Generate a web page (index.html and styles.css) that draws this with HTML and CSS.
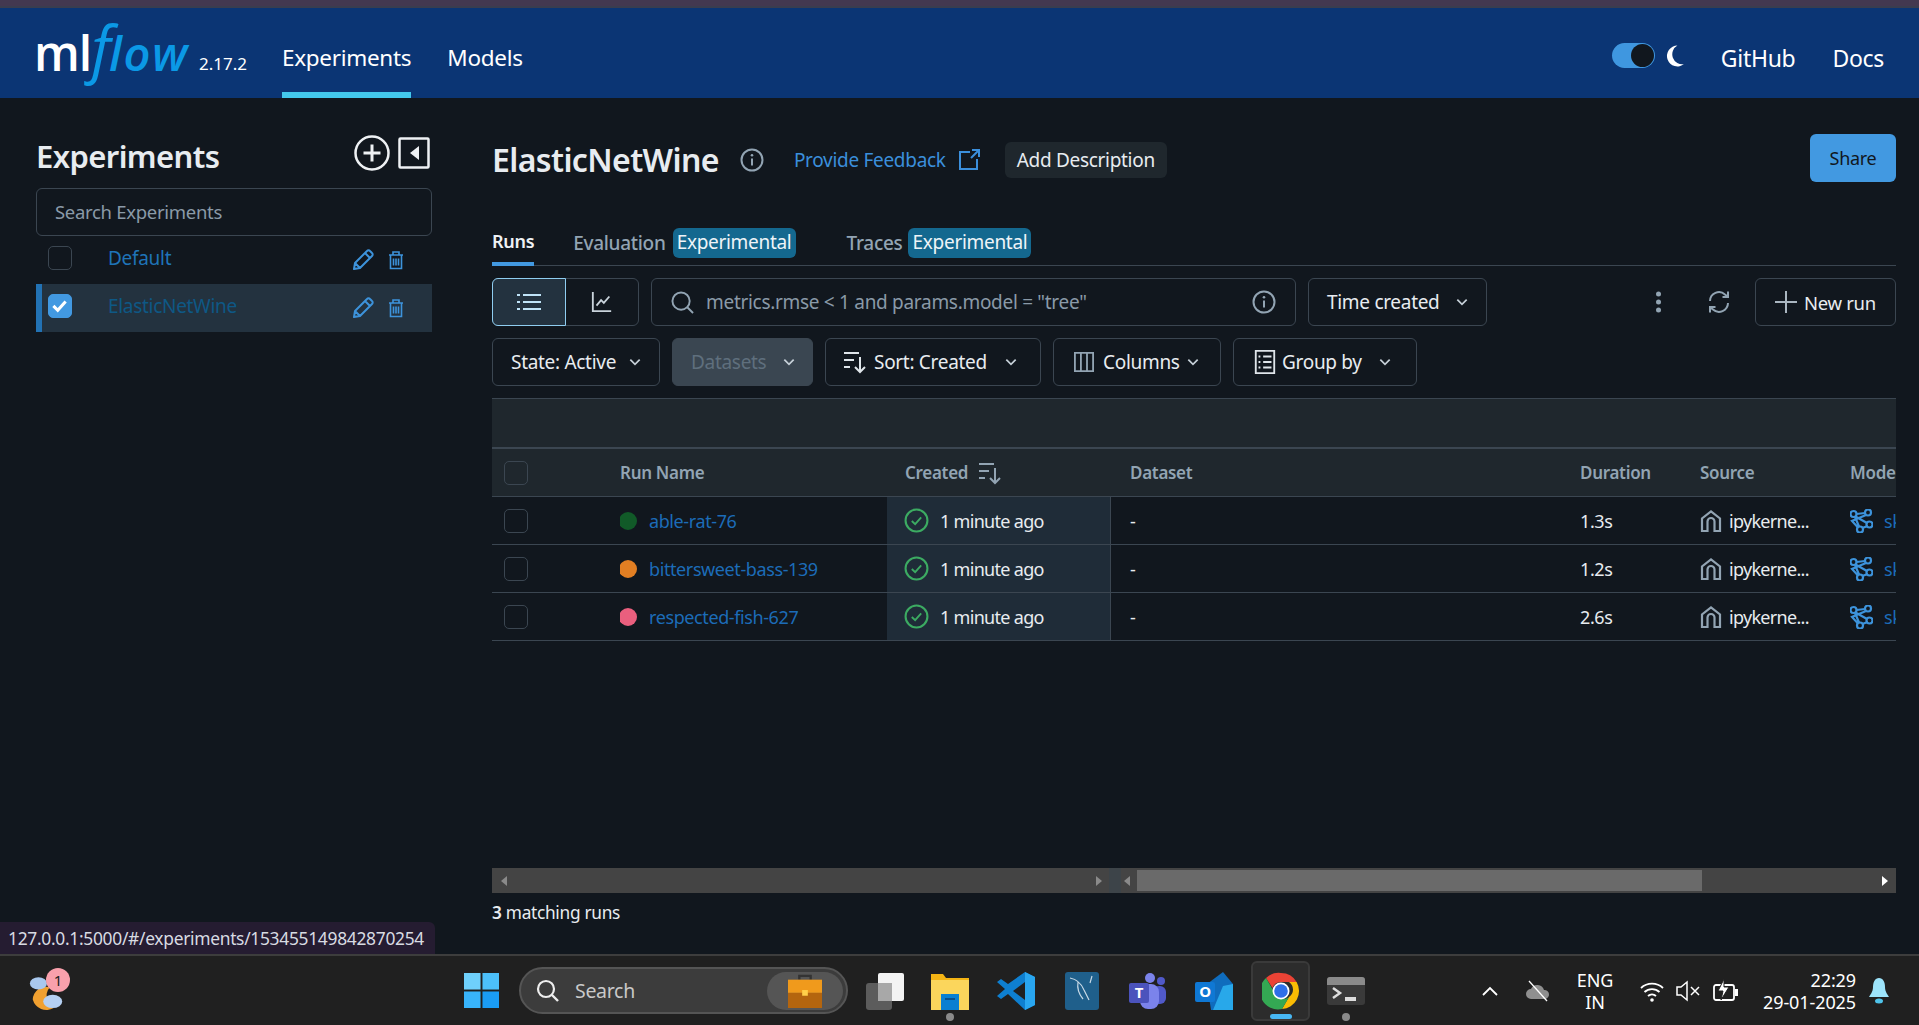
FILE: index.html
```html
<!DOCTYPE html>
<html lang="en">
<head>
<meta charset="utf-8">
<title>MLflow</title>
<link rel="stylesheet" href="styles.css">
</head>
<body>
<svg class="defs" width="0" height="0" aria-hidden="true">
  <symbol id="i-chev" viewBox="0 0 12 12"><path d="M2 4l4 4 4-4" fill="none" stroke="currentColor" stroke-width="1.5"/></symbol>
  <symbol id="i-info" viewBox="0 0 24 24"><circle cx="12" cy="12" r="10.5" fill="none" stroke="currentColor" stroke-width="2"/><path d="M12 10.5v7" stroke="currentColor" stroke-width="2"/><circle cx="12" cy="7.2" r="1.3" fill="currentColor"/></symbol>
  <symbol id="i-sort" viewBox="0 0 24 24"><path d="M1 3h15M1 10h10M1 17h6" stroke="currentColor" stroke-width="2" fill="none"/><path d="M17 7v15M12 17l5 5 5-5" stroke="currentColor" stroke-width="2" fill="none"/></symbol>
  <symbol id="i-pencil" viewBox="0 0 22 22"><path d="M2 20l1-6L15 2a2 2 0 0 1 3 0l2 2a2 2 0 0 1 0 3L8 19l-6 1zM3 14l5 5M13 4l5 5" fill="none" stroke="currentColor" stroke-width="2" stroke-linejoin="round"/></symbol>
  <symbol id="i-trash" viewBox="0 0 16 20"><path d="M1 5h14M5 5V2h6v3M2.500 5v13.500h11V5M5.500 8.500v7M8 8.500v7M10.500 8.500v7" fill="none" stroke="currentColor" stroke-width="1.600"/></symbol>
  <symbol id="i-check" viewBox="0 0 24 24"><circle cx="12" cy="12" r="10.500" fill="none" stroke="currentColor" stroke-width="2"/><path d="M7.500 12.500l3.200 3 5.800-6.500" fill="none" stroke="currentColor" stroke-width="1.800"/></symbol>
  <symbol id="i-home" viewBox="0 0 22 22"><path d="M2 21V8.500L11 1.500l9 7V21h-5.500V11.500a3.500 3.500 0 0 0-7 0V21z" fill="none" stroke="currentColor" stroke-width="2.200"/></symbol>
  <symbol id="i-model" viewBox="0 0 24 24"><g fill="none" stroke="currentColor" stroke-width="2.200"><circle cx="4.500" cy="5" r="3"/><circle cx="19" cy="3.500" r="3"/><circle cx="20.500" cy="15.500" r="3"/><circle cx="11" cy="20.500" r="3"/><path d="M7.500 5l8.500-1M6.500 7.500l11.500 6.500M17 6L3 12l6 6.500M6 8l4 9.500M18.500 17l-5 2"/></g></symbol>
</svg>

<div class="strip"></div>

<header class="header">
  <div class="logo"><span class="logo-ml">ml</span><span class="logo-flow"><span class="logo-f">f</span>low</span></div>
  <span class="version">2.17.2</span>
  <nav class="nav">
    <a class="nav-item nav-active">Experiments</a>
    <a class="nav-item">Models</a>
  </nav>
  <div class="header-right">
    <span class="switch"><span class="knob"></span></span>
    <svg class="moon" viewBox="0 0 20 24"><path d="M12 1a11 11 0 1 0 7 19.500A10.500 10.500 0 0 1 12 1z" fill="#fff"/></svg>
    <a class="ext-link github">GitHub</a>
    <a class="ext-link">Docs</a>
  </div>
</header>

<div class="content">
  <aside class="sidebar">
    <div class="side-head">
      <h2 class="side-title">Experiments</h2>
      <svg class="add-icon" viewBox="0 0 36 36"><circle cx="18" cy="18" r="16.500" fill="none" stroke="#eef1f4" stroke-width="2.500"/><path d="M18 9.500v17M9.500 18h17" stroke="#eef1f4" stroke-width="3"/></svg>
      <svg class="collapse-icon" viewBox="0 0 32 32"><rect x="1.500" y="1.500" width="29" height="29" fill="none" stroke="#eef1f4" stroke-width="2.500" rx="1"/><path d="M21 9v14l-9-7z" fill="#eef1f4"/></svg>
    </div>
    <div class="side-search">Search Experiments</div>
    <div class="exp-row">
      <span class="cbox"></span>
      <a class="exp-name">Default</a>
      <svg class="pencil"><use href="#i-pencil"/></svg>
      <svg class="trash"><use href="#i-trash"/></svg>
    </div>
    <div class="exp-row exp-active">
      <span class="cbox cbox-on"><svg viewBox="0 0 24 24"><path d="M5 12.500l5 5 9-10" fill="none" stroke="#fff" stroke-width="3.500"/></svg></span>
      <a class="exp-name exp-name-dim">ElasticNetWine</a>
      <svg class="pencil"><use href="#i-pencil"/></svg>
      <svg class="trash"><use href="#i-trash"/></svg>
    </div>
  </aside>

  <main class="main">
    <div class="title-row">
      <h1 class="title">ElasticNetWine</h1>
      <svg class="title-info"><use href="#i-info"/></svg>
      <a class="feedback">Provide Feedback</a>
      <svg class="ext-icon" viewBox="0 0 22 22"><path d="M12 3H2v17h17V10M13 9l8-8M14 1h7v7" fill="none" stroke="#3b8fdc" stroke-width="2"/></svg>
      <span class="add-desc">Add Description</span>
      <span class="share">Share</span>
    </div>

    <div class="tabs">
      <span class="tab tab-active">Runs</span>
      <span class="tab tab-eval">Evaluation</span>
      <span class="badge">Experimental</span>
      <span class="tab tab-traces">Traces</span>
      <span class="badge">Experimental</span>
    </div>

    <div class="toolbar">
      <div class="seg">
        <span class="seg-btn seg-on">
          <svg class="seg-icon" viewBox="0 0 24 18"><path d="M0 2h3M6 2h18M0 9h3M6 9h18M0 16h3M6 16h18" stroke="#bfe3f7" stroke-width="2" fill="none"/></svg>
        </span>
        <span class="seg-btn">
          <svg class="seg-icon" viewBox="0 0 24 24"><path d="M2 1v21h20M6 16l5-6 3 3 6-7" stroke="#c9d3db" stroke-width="2" fill="none"/></svg>
        </span>
      </div>
      <div class="query">
        <svg class="query-icon" viewBox="0 0 24 24"><circle cx="10.500" cy="10.500" r="9" fill="none" stroke="#92a4b3" stroke-width="2"/><path d="M17 17l6 6" stroke="#92a4b3" stroke-width="2"/></svg>
        <span class="query-text">metrics.rmse &lt; 1 and params.model = "tree"</span>
        <svg class="query-info"><use href="#i-info"/></svg>
      </div>
      <span class="btn btn-time">Time created<svg class="chev chev-time"><use href="#i-chev"/></svg></span>
      <svg class="dots" viewBox="0 0 6 24"><circle cx="3" cy="4" r="2.500"/><circle cx="3" cy="12" r="2.500"/><circle cx="3" cy="20" r="2.500"/></svg>
      <svg class="refresh" viewBox="0 0 24 24"><path d="M3 11a9 9 0 0 1 15-6.500L21 7M21 1.500V7h-5.500M21 13a9 9 0 0 1-15 6.500L3 17M3 22.500V17h5.500" fill="none" stroke="#92a4b3" stroke-width="2"/></svg>
      <span class="btn btn-new"><svg class="plus" viewBox="0 0 22 22"><path d="M11 0v22M0 11h22" stroke="#aab6c0" stroke-width="2"/></svg>New run</span>
    </div>

    <div class="toolbar toolbar-2">
      <span class="btn btn-state">State: Active<svg class="chev chev-state"><use href="#i-chev"/></svg></span>
      <span class="btn btn-datasets">Datasets<svg class="chev chev-data"><use href="#i-chev"/></svg></span>
      <span class="btn btn-sort"><svg class="btn-icon"><use href="#i-sort"/></svg>Sort: Created<svg class="chev chev-sort"><use href="#i-chev"/></svg></span>
      <span class="btn btn-cols"><svg class="btn-icon btn-icon-cols" viewBox="0 0 22 22"><path d="M1 1h20v20H1zM7.600 1v20M14.300 1v20" fill="none" stroke="#92a4b3" stroke-width="2"/></svg>Columns<svg class="chev chev-cols"><use href="#i-chev"/></svg></span>
      <span class="btn btn-group"><svg class="btn-icon" viewBox="0 0 22 26"><path d="M1 1h20v24H1z" fill="none" stroke="#dfe5ea" stroke-width="2"/><path d="M4 7h2M9 7h9M4 13h2M9 13h9M4 19h2M9 19h9" stroke="#dfe5ea" stroke-width="2"/></svg>Group by<svg class="chev chev-group"><use href="#i-chev"/></svg></span>
    </div>

    <div class="table">
      <div class="band"></div>
      <div class="row row-head">
        <span class="cell"><span class="cbox"></span></span>
        <span class="cell">Run Name</span>
        <span class="cell cell-created-head">Created<svg class="head-sort"><use href="#i-sort"/></svg></span>
        <span class="cell">Dataset</span>
        <span class="cell">Duration</span>
        <span class="cell">Source</span>
        <span class="cell">Models</span>
      </div>
      <div class="row">
        <span class="cell"><span class="cbox"></span></span>
        <span class="cell"><i class="dot dot-green"></i><a class="run-link">able-rat-76</a></span>
        <span class="cell cell-created"><svg class="ok"><use href="#i-check"/></svg>1 minute ago</span>
        <span class="cell">-</span>
        <span class="cell">1.3s</span>
        <span class="cell cell-source"><svg class="home"><use href="#i-home"/></svg>ipykerne...</span>
        <span class="cell"><svg class="model"><use href="#i-model"/></svg><a class="run-link model-link">sklearn</a></span>
      </div>
      <div class="row">
        <span class="cell"><span class="cbox"></span></span>
        <span class="cell"><i class="dot dot-orange"></i><a class="run-link">bittersweet-bass-139</a></span>
        <span class="cell cell-created"><svg class="ok"><use href="#i-check"/></svg>1 minute ago</span>
        <span class="cell">-</span>
        <span class="cell">1.2s</span>
        <span class="cell cell-source"><svg class="home"><use href="#i-home"/></svg>ipykerne...</span>
        <span class="cell"><svg class="model"><use href="#i-model"/></svg><a class="run-link model-link">sklearn</a></span>
      </div>
      <div class="row">
        <span class="cell"><span class="cbox"></span></span>
        <span class="cell"><i class="dot dot-pink"></i><a class="run-link">respected-fish-627</a></span>
        <span class="cell cell-created"><svg class="ok"><use href="#i-check"/></svg>1 minute ago</span>
        <span class="cell">-</span>
        <span class="cell">2.6s</span>
        <span class="cell cell-source"><svg class="home"><use href="#i-home"/></svg>ipykerne...</span>
        <span class="cell"><svg class="model"><use href="#i-model"/></svg><a class="run-link model-link">sklearn</a></span>
      </div>
    </div>

    <div class="spacer"></div>

    <div class="hscroll">
      <i class="arr arr-l arr-first"></i>
      <i class="arr arr-r arr-mid"></i>
      <i class="sep"></i>
      <i class="arr arr-l arr-second"></i>
      <i class="thumb"></i>
      <i class="arr arr-r arr-last"></i>
    </div>
    <div class="matching"><b>3</b> matching runs</div>
  </main>
</div>

<div class="status">127.0.0.1:5000/#/experiments/153455149842870254</div>

<footer class="taskbar">
  <div class="weather">
    <svg viewBox="0 0 40 40" class="weather-icon">
      <path d="M5 29a15 15 0 0 0 22 9 14 14 0 0 1-6-8 12 12 0 0 1 2-14 14 14 0 0 0-18 13z" fill="#f0a030"/>
      <ellipse cx="11" cy="12" rx="9" ry="6.500" fill="#a9c8ee"/>
      <ellipse cx="26" cy="31" rx="10" ry="7" fill="#b5d0f2"/>
    </svg>
    <span class="weather-badge">1</span>
  </div>

  <div class="task-center">
    <svg class="win" viewBox="0 0 36 36"><rect width="17" height="17" fill="#6fd0fb"/><rect x="19" width="17" height="17" fill="#4cc0fa"/><rect y="19" width="17" height="17" fill="#38b4fb"/><rect x="19" y="19" width="17" height="17" fill="#1a9cf5"/></svg>
    <div class="tsearch">
      <svg class="tsearch-icon" viewBox="0 0 24 24"><circle cx="10" cy="10" r="8" fill="none" stroke="#eee" stroke-width="2.200"/><path d="M16 16l6 6" stroke="#eee" stroke-width="2.400"/></svg>
      <span class="tsearch-text">Search</span>
      <span class="tsearch-pill">
        <svg class="case" viewBox="0 0 36 36"><path d="M12 6V2h12v4" fill="none" stroke="#333" stroke-width="2.500"/><rect y="6" width="36" height="14" fill="#f09a1c"/><rect y="20" width="36" height="16" fill="#b4650e"/><rect x="15" y="17" width="6" height="6" fill="#ffd04a"/></svg>
      </span>
    </div>
    <svg class="tb tb-view" viewBox="0 0 38 38"><rect x="0" y="11" width="26" height="27" rx="3" fill="#5c5c5c"/><rect x="12" y="1" width="26" height="28" rx="2" fill="#f3f3f3"/><rect x="12" y="11" width="14" height="18" fill="#a8a8a8"/></svg>
    <span class="tb-wrap tb-explorer">
      <svg class="tb" viewBox="0 0 38 38"><path d="M0 2h12l3 4h23v32H0z" fill="#f4b414"/><path d="M0 8h38v30H0z" fill="#fbd65c"/><path d="M10 22h18v16H10z" fill="#0a7fd1"/><path d="M14 27h10" stroke="#0a4f8a" stroke-width="2"/></svg>
      <i class="pip"></i>
    </span>
    <svg class="tb tb-code" viewBox="0 0 38 38"><path d="M28 0l10 5v28l-10 5-17-16-7 5-4-3 8-7-8-7 4-3 7 5z" fill="#0e7fd0"/><path d="M28 10L16 19l12 9z" fill="#202020"/><path d="M28 0l10 5v28l-10 5z" fill="#29a6f0"/></svg>
    <svg class="tb tb-sql" viewBox="0 0 34 38"><rect width="34" height="38" rx="3" fill="#1f5f8b"/><path d="M5 6c6 1 11 5 14 12l5 10M13 10c-1 6 0 11 5 17M27 4l-2 7" fill="none" stroke="#c7d9e6" stroke-width="1.200"/></svg>
    <svg class="tb tb-teams" viewBox="0 0 38 38"><circle cx="21" cy="6" r="5" fill="#7b83eb"/><circle cx="32" cy="9" r="4" fill="#5059c9"/><rect x="24" y="14" width="13" height="18" rx="6" fill="#5059c9"/><rect x="11" y="12" width="19" height="25" rx="8" fill="#7b83eb"/><rect x="0" y="11" width="20" height="20" rx="2" fill="#4b53bc"/><text x="10" y="26" class="tb-letter">T</text></svg>
    <svg class="tb tb-outlook" viewBox="0 0 38 38"><path d="M12 12L28 0l10 12v26H16z" fill="#0f6cbd"/><path d="M28 14l10-2v26H18z" fill="#28a8ea"/><rect x="0" y="10" width="20" height="20" rx="2" fill="#0f78d4"/><text x="10" y="25" class="tb-letter">O</text></svg>
    <span class="tb-active">
      <svg class="tb" viewBox="0 0 38 38"><path d="M19 1a18 18 0 0 1 15.600 9H19a9 9 0 0 0-8.500 6L4 6A18 18 0 0 1 19 1z" fill="#ea4335"/><path d="M34.600 10A18 18 0 0 1 20 37l7-12a9 9 0 0 0 0-15z" fill="#fbbc04"/><path d="M4 6l9 15.500A9 9 0 0 0 27 25l-7 12A18 18 0 0 1 4 6z" fill="#34a853"/><circle cx="19" cy="19" r="8.500" fill="#fff"/><circle cx="19" cy="19" r="6.800" fill="#2f6fe8"/></svg>
      <i class="active-bar"></i>
    </span>
    <span class="tb-wrap tb-term">
      <svg class="tb-term-icon" viewBox="0 0 38 28"><rect width="38" height="28" rx="3" fill="#3a3a3a"/><path d="M0 8V3a3 3 0 0 1 3-3h32a3 3 0 0 1 3 3v5z" fill="#8a8a8a"/><path d="M6 11l7 5-7 5" fill="none" stroke="#ddd" stroke-width="2.500"/><rect x="18" y="20" width="11" height="4" fill="#ddd"/></svg>
      <i class="pip"></i>
    </span>
  </div>

  <div class="tray">
    <svg class="tray-chev" viewBox="0 0 16 10"><path d="M1 9l7-7 7 7" fill="none" stroke="#fff" stroke-width="1.800"/></svg>
    <svg class="tray-cloud" viewBox="0 0 24 22"><path d="M5 19a5 5 0 0 1 0-10 7 7 0 0 1 13 1 4.500 4.500 0 0 1 1 9z" fill="#8f8f8f"/><path d="M3 1l18 20" stroke="#fff" stroke-width="1.300"/></svg>
    <div class="lang"><span>ENG</span><span>IN</span></div>
    <svg class="tray-wifi" viewBox="0 0 24 24"><path d="M1 9a16 16 0 0 1 22 0M4.500 13a11 11 0 0 1 15 0M8 17a6 6 0 0 1 8 0" fill="none" stroke="#fff" stroke-width="1.800"/><circle cx="12" cy="21" r="1.800" fill="#fff"/></svg>
    <svg class="tray-sound" viewBox="0 0 24 22"><path d="M1 7h4l6-5v18l-6-5H1z" fill="none" stroke="#fff" stroke-width="1.500"/><path d="M15 7l8 8M23 7l-8 8" stroke="#fff" stroke-width="1.500"/></svg>
    <svg class="tray-batt" viewBox="0 0 26 26"><rect x="1" y="7" width="20" height="15" rx="2" fill="none" stroke="#fff" stroke-width="1.800"/><rect x="22" y="11" width="3" height="7" fill="#fff"/><path d="M11 1L5 13h5l-2 9 8-13h-5z" fill="#fff" stroke="#202020"/></svg>
    <div class="clock"><span>22:29</span><span>29-01-2025</span></div>
    <svg class="tray-bell" viewBox="0 0 22 28"><path d="M11 1c4 0 6 4 6 9 0 5 3 8 4 10H1c1-2 4-5 4-10 0-5 2-9 6-9z" fill="#9de4fb"/><ellipse cx="11" cy="24" rx="4" ry="2.500" fill="#4fc3ea"/></svg>
  </div>
</footer>
</body>
</html>
```

FILE: styles.css
```css
* { box-sizing: border-box; }
html, body { margin: 0; height: 100%; }
body {
  width: 1919px; height: 1025px; overflow: hidden; position: relative;
  display: flex; flex-direction: column;
  background: #11171e; color: #e8ecf0;
  font-family: "Noto Sans", "Open Sans", sans-serif; font-size: 19px; letter-spacing: -0.3px;
}
.defs { position: absolute; }
h1, h2 { margin: 0; font-weight: 600; }

.strip { height: 8px; background: #433850; border-bottom: 2px solid #3a3d4f; flex: none; }

.header { height: 90px; flex: none; background: #0b3574; display: flex; align-items: stretch; padding-left: 34px; color: #fff; }
.logo { display: flex; align-items: baseline; width: 162px; height: 60px; margin-top: 15px; line-height: 60px; letter-spacing: 0; }
.logo-ml { font-size: 48px; font-weight: 600; font-family: "Open Sans", sans-serif; color: #fff; letter-spacing: -1px; }
.logo-flow { font-size: 47px; font-weight: 600; font-style: italic; font-family: "Open Sans", sans-serif; color: #0b99e6; letter-spacing: 1.500px; }
.logo-f { font-size: 62px; font-weight: 500; line-height: 0; margin-right: -3px; }
.version { font-size: 17px; margin: 44px 0 0 3px; width: 83px; letter-spacing: 0; }
.nav { display: flex; gap: 36px; }
.nav-item { font-size: 22.500px; height: 90px; padding-top: 15px; display: flex; align-items: center; border-bottom: 6px solid transparent; }
.nav-active { border-bottom-color: #43c9ed; }
.header-right { margin-left: auto; display: flex; align-items: center; padding: 9px 35px 0 0; }
.switch { width: 43px; height: 25px; border-radius: 13px; background: #3f97e0; position: relative; display: block; margin-top: -4px; }
.knob { position: absolute; right: 1px; top: 1px; width: 23px; height: 23px; border-radius: 50%; background: #11171e; }
.moon { width: 19px; height: 24px; margin: -4px 0 0 11px; }
.ext-link { font-size: 23px; }
.github { margin-left: 36px; margin-right: 37px; }

.content { flex: 1; display: flex; min-height: 0; }
.sidebar { width: 396px; margin-left: 36px; flex: none; padding-top: 37px; }
.side-head { display: flex; align-items: flex-start; height: 53px; }
.side-title { font-size: 31px; font-weight: 600; flex: 1; letter-spacing: -0.6px; line-height: 42px; margin-top: -8px; padding-top: 8px; }
.add-icon { width: 36px; height: 36px; margin-right: 8px; }
.collapse-icon { width: 32px; height: 32px; margin: 2px 2px 0 0; }
.side-search { height: 48px; border: 1px solid #3b4651; border-radius: 6px; padding-left: 18px; line-height: 45px; color: #8a9aa8; font-size: 18.500px; }
.exp-row { display: flex; align-items: center; height: 48px; padding: 0 0 5px 12px; }
.exp-active { background: #23323f; border-left: 6px solid #2272b4; padding-left: 6px; }
.cbox { width: 24px; height: 24px; border: 1.500px solid #3b4651; border-radius: 5px; display: block; flex: none; }
.cbox-on { background: #4299e1; border-color: #4299e1; }
.cbox-on svg { display: block; width: 21px; height: 21px; }
.exp-name { margin-left: 36px; flex: 1; color: #1f74b8; }
.exp-name-dim { color: #0e5885; }
.pencil { width: 22px; height: 22px; color: #3d93db; margin-top: 5px; }
.trash { width: 16px; height: 20px; color: #3d93db; margin: 5px 28px 0 14px; }

.main { flex: 1; min-width: 0; margin: 0 23px 0 60px; display: flex; flex-direction: column; }
.title-row { display: flex; align-items: center; height: 66px; margin-top: 29px; position: relative; flex: none; }
.title { font-size: 32px; font-weight: 600; letter-spacing: -0.6px; margin-top: -2px; }
.title-info { width: 24px; height: 24px; color: #92a4b3; margin-left: 21px; }
.feedback { color: #3b8fdc; margin-left: 30px; }
.ext-icon { width: 22px; height: 22px; margin-left: 12px; }
.add-desc { background: #1f272d; border-radius: 6px; height: 36px; line-height: 37px; padding: 0 12px; margin-left: 25px; }
.share { margin-left: auto; background: #4299e1; color: #11171e; border-radius: 6px; width: 86px; height: 48px; line-height: 48px; text-align: center; position: relative; top: -2px; font-size: 18px; }

.tabs { display: flex; align-items: center; height: 49px; margin-top: 24px; padding-top: 3px; border-bottom: 1px solid #3b4651; position: relative; flex: none; }
.tab { color: #92a4b3; font-weight: 500; }
.tab-active { color: #eef1f4; font-weight: 600; font-size: 18px; height: 49px; line-height: 48px; border-bottom: 4px solid #4299e1; align-self: flex-start; margin: -3px 0 -1px; }
.tab-eval { margin-left: 39px; margin-right: 7px; }
.tab-traces { margin-left: 51px; margin-right: 6px; }
.badge { background: #14688f; color: #eef4f8; border-radius: 6px; height: 30px; line-height: 28px; width: 123px; text-align: center; }

.toolbar { display: flex; align-items: stretch; height: 48px; margin-top: 12px; flex: none; }
.toolbar-2 { gap: 12px; }
.seg { display: flex; width: 147px; border: 1px solid #3b4651; border-radius: 6px; flex: none; }
.seg-btn { flex: 1; display: flex; align-items: center; justify-content: center; }
.seg-on { background: #23323f; border: 1px solid #8fcdf0; border-radius: 6px 0 0 6px; margin: -1px 0 -1px -1px; }
.seg-icon { width: 24px; height: 22px; }
.query { width: 645px; margin-left: 12px; display: flex; align-items: center; border: 1px solid #3b4651; border-radius: 6px; padding: 0 19px 0 19px; flex: none; }
.query-icon { width: 23px; height: 23px; }
.query-text { color: #8a9aa8; margin-left: 12px; flex: 1; }
.query-info { width: 24px; height: 24px; color: #92a4b3; }
.btn { display: inline-flex; align-items: center; border: 1px solid #3b4651; border-radius: 6px; padding: 0 0 0 18px; flex: none; white-space: nowrap; }
.btn-time { width: 179px; margin-left: 12px; }
.chev { width: 14px; height: 14px; margin-left: 14px; color: #c5cfd7; }
.chev-time { margin-left: 15px; }
.chev-state { margin-left: 12px; }
.chev-data { margin-left: 16px; }
.dots { width: 7px; height: 24px; fill: #92a4b3; align-self: center; margin-left: auto; }
.refresh { width: 24px; height: 24px; align-self: center; margin: 0 24px 0 45px; }
.btn-new { width: 141px; padding-left: 19px; font-size: 18.500px; }
.plus { width: 22px; height: 22px; margin-right: 7px; }
.btn-state { width: 168px; }
.btn-datasets { width: 141px; background: #3a4651; color: #5f6f7d; }
.btn-sort { width: 216px; padding-left: 17px; }
.btn-icon { width: 24px; height: 24px; margin-right: 7px; color: #dfe5ea; }
.btn-icon-cols { width: 20px; margin-right: 9px; }
.chev-sort { margin-left: 17px; }
.btn-cols { width: 168px; padding-left: 20px; }
.chev-cols { margin-left: 6px; }
.btn-group { width: 184px; padding-left: 19px; }
.btn-group .btn-icon { margin-right: 5px; }
.chev-group { margin-left: 16px; }

.table { margin-top: 12px; overflow: hidden; flex: none; font-size: 18px; letter-spacing: -0.4px; }
.band { height: 51px; background: #1f272d; border-top: 1px solid #3b4651; border-bottom: 2px solid #3b4651; }
.row { display: grid; grid-template-columns: 128px 267px 224px 469px 120px 150px 100px; height: 48px; border-bottom: 1px solid #3b4651; width: 1458px; }
.row-head { background: #1f272d; color: #92a4b3; font-weight: 600; font-size: 17px; letter-spacing: -0.3px; }
.cell { display: flex; align-items: center; white-space: nowrap; overflow: hidden; }
.cell:first-child { padding-left: 12px; }
.cell:nth-child(3) { padding-left: 18px; }
.cell:nth-child(4) { padding-left: 19px; }
.cell-created { background: #1f2c38; border-right: 1px solid #3b4651; letter-spacing: -0.7px; }
.cell-source { letter-spacing: -0.7px; }
.head-sort { width: 24px; height: 24px; margin-left: 10px; color: #92a4b3; }
.dot { width: 18px; height: 18px; border-radius: 50%; margin: 0 12px 0 -1px; flex: none; }
.dot-green { background: #115a28; }
.dot-orange { background: #e27f23; }
.dot-pink { background: #ea5f7e; }
.run-link { color: #1c6cb8; }
.ok { width: 25px; height: 25px; color: #3cab62; margin: 0 11px 0 -1px; flex: none; }
.home { width: 22px; height: 22px; color: #92a4b3; margin-right: 7px; flex: none; }
.model { width: 24px; height: 24px; color: #3d93db; margin: 0 11px 0 -1px; flex: none; }

.spacer { flex: 1; }
.hscroll { height: 25px; background: #444; display: flex; align-items: center; flex: none; }
.arr { width: 0; height: 0; border-top: 5px solid transparent; border-bottom: 5px solid transparent; display: block; flex: none; }
.arr-l { border-right: 6px solid #8a8a8a; }
.arr-r { border-left: 6px solid #8a8a8a; }
.arr-first { margin-left: 9px; }
.arr-mid { margin-left: 589px; }
.sep { width: 12px; height: 25px; margin-left: 7px; background: #3d4449; display: block; }
.arr-second { margin-left: 3px; }
.thumb { width: 565px; height: 21px; background: #6a6a6a; margin-left: 7px; display: block; }
.arr-last { border-left-color: #fff; margin-left: auto; margin-right: 8px; }
.matching { height: 40px; line-height: 40px; margin-bottom: 21px; font-size: 17.300px; flex: none; }
.matching b { font-weight: 600; }

.status { position: absolute; left: 0; top: 922px; width: 435px; height: 32px; line-height: 32px; padding-left: 8px; background: #251c31; color: #d8dbe2; border-radius: 0 6px 0 0; font-size: 17.400px; }

.taskbar { height: 71px; flex: none; background: #202020; border-top: 2px solid #3d3d3d; display: flex; align-items: center; position: relative; }
.weather { width: 42px; height: 40px; margin-left: 28px; position: relative; flex: none; }
.weather-icon { width: 38px; height: 40px; display: block; }
.weather-badge { position: absolute; left: 18px; top: -3px; width: 24px; height: 24px; border-radius: 50%; background: #f9a0ac; color: #222; text-align: center; font-size: 15px; line-height: 24px; }

.task-center { display: flex; align-items: center; margin-left: 394px; }
.win { width: 35px; height: 35px; flex: none; }
.tsearch { width: 329px; height: 47px; margin-left: 20px; border-radius: 24px; background: #3c3c3c; border: 2px solid #555; display: flex; align-items: center; padding-left: 15px; flex: none; }
.tsearch-icon { width: 24px; height: 24px; }
.tsearch-text { color: #c9c9c9; margin-left: 15px; font-size: 19.500px; flex: 1; }
.tsearch-pill { width: 76px; height: 38px; border-radius: 19px; background: #555; margin-right: 3px; display: flex; align-items: center; justify-content: center; }
.case { width: 34px; height: 34px; }
.tb { width: 38px; height: 38px; flex: none; display: block; }
.tb-view { margin-left: 18px; }
.tb-wrap { position: relative; display: flex; align-items: center; height: 38px; flex: none; }
.tb-explorer { margin-left: 27px; }
.pip { position: absolute; left: 15px; top: 41px; width: 8px; height: 8px; border-radius: 50%; background: #8a8a8a; display: block; }
.tb-code { margin-left: 28px; }
.tb-sql { margin-left: 30px; width: 34px; }
.tb-teams { margin-left: 30px; }
.tb-outlook { margin-left: 28px; }
.tb-letter { font-size: 15px; font-weight: 700; fill: #fff; text-anchor: middle; font-family: "Noto Sans", sans-serif; }
.tb-active { width: 59px; height: 60px; margin-left: 18px; background: #2c2c2c; border: 2px solid #3a3a3a; border-radius: 6px; display: flex; justify-content: center; padding-top: 9px; position: relative; flex: none; }
.active-bar { position: absolute; left: 17px; bottom: 0; width: 22px; height: 5px; border-radius: 3px; background: #48b8f5; display: block; }
.tb-term { margin-left: 17px; }
.tb-term-icon { width: 38px; height: 28px; display: block; }

.tray { position: absolute; left: 0; right: 0; top: 0; bottom: 0; display: flex; align-items: center; justify-content: flex-end; padding-right: 29px; pointer-events: none; color: #fff; font-size: 18px; letter-spacing: -0.1px; }
.tray-chev { width: 16px; height: 10px; margin-right: 28px; }
.tray-cloud { width: 24px; height: 22px; margin-right: 25px; }
.lang { display: flex; flex-direction: column; align-items: center; line-height: 22px; width: 40px; margin-right: 25px; }
.tray-wifi { width: 24px; height: 24px; margin-right: 12px; }
.tray-sound { width: 24px; height: 22px; margin-right: 13px; }
.tray-batt { width: 26px; height: 26px; margin-right: 24px; }
.clock { display: flex; flex-direction: column; align-items: flex-end; line-height: 22px; }
.tray-bell { width: 22px; height: 28px; margin-left: 12px; }
```
